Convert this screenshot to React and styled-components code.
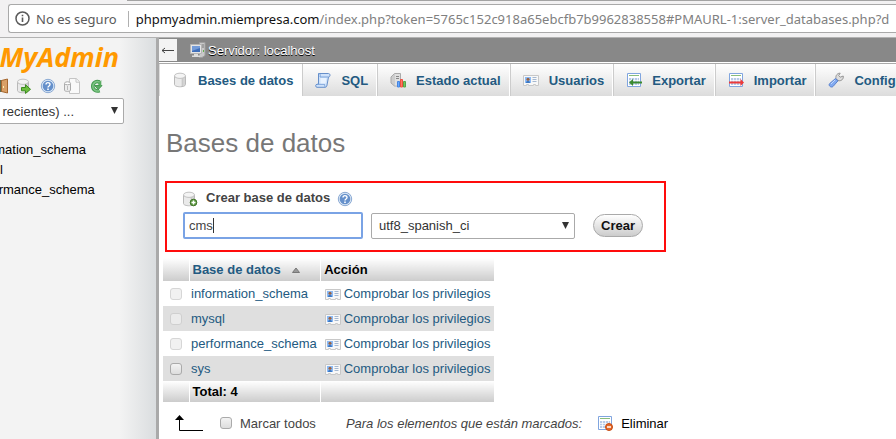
import React from "react";
import styled, { createGlobalStyle, css } from "styled-components";

const GlobalStyle = createGlobalStyle`
  * { box-sizing: border-box; }
  html, body, #root { height: 100%; }
  body {
    margin: 0;
    overflow: hidden;
    background: #fff;
    color: #444;
    font-family: "Liberation Sans", Arial, sans-serif;
    font-size: 13px;
  }
  button, input, select { font: inherit; }
  a { color: #235a81; text-decoration: none; }
  svg { display: block; flex: none; }
`;

const Window = styled.div`
  display: flex;
  flex-direction: column;
  height: 100%;
`;

/* browser bar */
const BrowserBar = styled.header`
  flex: none;
  height: 38px;
  padding: 4px 0 0 8px;
  background: linear-gradient(#a3a3a3, #a3a3a3) 127px 0 / 100% 1px no-repeat #f2f1f2;
  border-bottom: 1px solid #b2b2b2;
  overflow: hidden;
`;
const AddressBox = styled.div`
  display: flex;
  align-items: center;
  height: 29px;
  padding-left: 6px;
  border: 1px solid #a9a9a9;
  border-right: 0;
  border-radius: 3px 0 0 3px;
  background: #fff;
  color: #5a5a5a;
  font-family: "Noto Sans", "Open Sans", sans-serif;
  font-size: 13px;
  line-height: 20px;
  white-space: nowrap;
`;
const Security = styled.span`
  margin-left: 6px;
  padding-right: 11px;
  border-right: 1px solid #b0b0b0;
  line-height: 16px;
`;
const Url = styled.span`
  margin-left: 7px;
  color: #808080;
`;
const Host = styled.span`
  color: #111;
`;

const Body = styled.div`
  display: flex;
  flex: 1;
  min-height: 0;
`;

/* navigation panel, scrolled to its right part */
const Sidebar = styled.aside`
  flex: none;
  width: 159px;
  overflow: hidden;
  border-right: 3px solid #aaa;
  background: linear-gradient(to right, #f3f3f3 120px, #dadddf 156px);
`;
const SidebarContent = styled.div`
  display: flex;
  flex-direction: column;
  align-items: flex-end;
  width: 164px;
  margin-left: -40px;
  padding-top: 2px;
`;
const Logo = styled.a`
  margin-right: 5px;
  color: #f90;
  font-family: "Open Sans", "Noto Sans", sans-serif;
  font-size: 27px;
  font-weight: 700;
  font-style: italic;
  line-height: 34px;
`;
const IconLinks = styled.nav`
  display: flex;
  gap: 8px;
  margin: 4px 20px 4px 0;
  a { display: block; }
`;
const DbList = styled.ul`
  align-self: stretch;
  margin: 16px 0 0;
  padding: 0 0 0 9px;
  list-style: none;
  line-height: 20px;
  a { color: #000; }
`;

/* drop-downs */
const SelectWrap = styled.span`
  position: relative;
  display: block;
  width: ${(p) => p.$width}px;
  svg {
    position: absolute;
    top: 9px;
    right: 6px;
    pointer-events: none;
  }
`;
const Select = styled.select`
  display: block;
  width: 100%;
  height: 26px;
  padding: 0 20px 0 7px;
  border: 1px solid #aaa;
  border-radius: 2px;
  background: #fff;
  color: #333;
  appearance: none;
`;

/* main panel */
const Main = styled.main`
  flex: 1;
  min-width: 0;
  overflow: hidden;
`;
const ServerBar = styled.div`
  display: flex;
  align-items: center;
  height: 24px;
  background: #888;
  color: #fff;
  text-shadow: 0 1px 0 #000;
  a { color: #fff; }
`;
const CollapseButton = styled.button`
  width: 18px;
  height: 22px;
  margin-right: 13px;
  padding: 0 0 0 2px;
  border: 0;
  background: #f3f3f3;
`;
const ServerLink = styled.a`
  display: flex;
  align-items: center;
  gap: 2px;
`;
const Tabs = styled.nav`
  display: flex;
  margin-top: 1px;
  border-top: 1px solid #aaa;
`;
const Tab = styled.a`
  display: flex;
  flex: none;
  align-items: center;
  gap: 10px;
  height: 32px;
  padding: 0 8px 0 12px;
  border-left: 1px solid #ccc;
  border-right: 1px solid #fff;
  background: linear-gradient(#fff, #dcdcdc);
  font-weight: 700;
  white-space: nowrap;
  ${(p) => p.$active && css`
    border-left-color: #ddd;
    background: #fff;
  `}
`;
const Title = styled.h1`
  margin: 32px 7px 23px;
  color: #777;
  font-size: 26px;
  font-weight: 400;
  line-height: 30px;
`;
const CreateForm = styled.form`
  max-width: 501px;
  height: 71px;
  margin: 0 6px;
  padding: 5px 16px;
  border: 2px solid #ff0c0c;
`;
const FormLabel = styled.label`
  display: flex;
  align-items: flex-start;
  gap: 7px;
  height: 24px;
  font-weight: 700;
  line-height: 20px;
  svg { margin-top: 3px; }
`;
const FormRow = styled.div`
  display: flex;
  align-items: center;
  height: 27px;
`;
const NameField = styled.span`
  position: relative;
  margin-right: 8px;
`;
const NameInput = styled.input`
  display: block;
  width: 180px;
  height: 27px;
  padding: 0 4px;
  border: 2px solid #7aa3e5;
  border-radius: 2px;
  outline: 0;
  background: #fff;
  color: #444;
`;
const Caret = styled.span`
  position: absolute;
  top: 6px;
  left: 30px;
  width: 1px;
  height: 15px;
  background: #333;
`;
const CreateButton = styled.button`
  height: 23px;
  margin-left: 18px;
  padding: 0 7px;
  border: 1px solid #aaa;
  border-radius: 12px;
  background: linear-gradient(#fff, #ccc);
  color: #111;
  font-weight: 700;
`;

/* databases table */
const Table = styled.table`
  margin: 6px 4px 0;
  border-collapse: collapse;
  line-height: 16px;
  tr:nth-child(even) td { background: #dfdfdf; }
`;
const HeadCell = styled.th`
  height: ${(p) => (p.$foot ? 21 : 23)}px;
  padding: 0 3px;
  border-left: ${(p) => (p.$first ? 0 : 1)}px solid #fff;
  background: linear-gradient(#fff, #ccc);
  color: #000;
  text-align: left;
  white-space: nowrap;
`;
const SortLink = styled.a`
  display: flex;
  align-items: center;
  gap: 11px;
`;
const Cell = styled.td`
  height: 25px;
  padding: 0 4px 0 2px;
  white-space: nowrap;
`;
const CheckCell = styled(Cell)`
  width: 26px;
  padding: 0 7px;
`;
const ActionCell = styled(Cell)`
  padding-left: 4px;
`;
const PrivLink = styled.a`
  display: flex;
  align-items: center;
  gap: 3px;
`;
const Check = styled.input`
  display: block;
  width: 12px;
  height: 12px;
  margin: 0;
  border: 1px solid #aaa;
  border-radius: 3px;
  background: linear-gradient(#f3f3f3, #ddd);
  appearance: none;
  &:disabled { border-color: #ccc; background: #eee; opacity: 0.8; }
`;

const BulkRow = styled.div`
  display: flex;
  align-items: center;
  height: 20px;
  margin: 11px 0 0 15px;
  white-space: nowrap;
`;
const CheckAll = styled.label`
  display: flex;
  align-items: center;
  gap: 8px;
  margin: 0 30px 0 16px;
`;
const DropButton = styled.button`
  display: flex;
  align-items: center;
  gap: 8px;
  margin-left: 15px;
  padding: 0;
  border: 0;
  background: none;
  color: #000;
`;

const Icon = ({ children, w = 16 }) => (
  <svg width={w} height="16" viewBox={`0 0 ${w} 16`} aria-hidden="true">{children}</svg>
);

const Cylinder = () => (
  <g>
    <path d="M2.500 4v8.500c0 3 11 3 11 0V4" fill="#dedede" stroke="#b9b9b9" />
    <path d="M4 5.500v8M6 6v8.300M8 6v8.500" stroke="#f6f6f6" />
    <path d="M10.500 6v8M12 5v8.500" stroke="#c9c9c9" />
    <ellipse cx="8" cy="3.800" rx="5.500" ry="2.600" fill="#f4f4f4" stroke="#c2c2c2" />
  </g>
);
const DbIcon = () => <Icon><Cylinder /></Icon>;
const DbAddIcon = () => (
  <Icon>
    <g transform="translate(-2 0)"><Cylinder /></g>
    <circle cx="10.500" cy="11.500" r="3.300" fill="#5d9a40" stroke="#3f7427" />
    <path d="M10.500 9.500v4M8.500 11.500h4" stroke="#fff" strokeWidth="1.400" />
  </Icon>
);
const DbGoIcon = () => (
  <Icon>
    <g transform="translate(-1 0)"><Cylinder /></g>
    <path d="M5.500 9.500h4V6.700l5 4.600-5 4.200v-2.700h-4z" fill="#6cbf3e" stroke="#3d8a22" />
  </Icon>
);
const HelpIcon = () => (
  <Icon>
    <circle cx="8" cy="8" r="6.700" fill="#dce8f6" stroke="#8aa9d3" />
    <circle cx="8" cy="8" r="5.300" fill="#6590cb" />
    <path d="M6 6.600C6 4 10 4 10 6.500 10 8 8 7.900 8 9.500" fill="none" stroke="#fff" strokeWidth="1.400" />
    <path d="M7.200 10.600h1.600v1.500H7.200z" fill="#fff" />
  </Icon>
);
const ExitIcon = () => (
  <Icon>
    <path d="M1 2h9v12H1z" fill="#5b6d52" />
    <path d="M9.500 2.500 15.500 1v14l-6-1.500z" fill="#d9a066" stroke="#a5672f" />
    <path d="M11.500 8v2" stroke="#fff2b0" />
  </Icon>
);
const DocIcon = () => (
  <Icon>
    <path d="M5.500.5h6.800l3.200 3.200v11.800h-10z" fill="#f9f9f9" stroke="#c5c5c5" />
    <path d="M12 .8v3.400h3.400" fill="none" stroke="#c5c5c5" />
    <path d="M.5 5.500v6.700c0 1.600 6 1.600 6 0V5.500" fill="#ededed" stroke="#aaa" />
    <ellipse cx="3.500" cy="5.300" rx="3" ry="1.500" fill="#fff" stroke="#aaa" />
    <path d="M3.500 8v4" stroke="#bbb" />
  </Icon>
);
const ReloadIcon = () => (
  <Icon>
    <path d="M11.500 4A4.700 4.700 0 1 0 11.500 12.500" fill="none" stroke="#459a50" strokeWidth="3.600" />
    <path d="M11.500 4A4.700 4.700 0 1 0 11.500 12.500" fill="none" stroke="#7cc583" strokeWidth="1.600" />
    <path d="M6.500 7.500h7.500L10.300 11.500z" fill="#5aab62" stroke="#459a50" />
    <path d="M13.300 2v6.500L9.500 6z" fill="#5aab62" />
  </Icon>
);
const ServerIcon = () => (
  <Icon>
    <path d="M9.500.5h5.500v13l-3 2h-2.500z" fill="#c9c9c9" stroke="#9e9e9e" />
    <path d="M11 3h3M11 5h3" stroke="#777" />
    <path d="M13.500 8v2" stroke="#62b34b" />
    <path d="M.5 2.500h11v9H.5z" fill="#e5e5e5" stroke="#b5b5b5" />
    <path d="M2 4h8v6H2z" fill="#3f6fba" />
    <path d="M2 4h8v2l-8 3z" fill="#739bd8" />
    <path d="M4 12h4v1.500h2v1.500H2v-1.500h2z" fill="#ddd" />
  </Icon>
);
const SqlIcon = () => (
  <Icon>
    <path d="M3.500 1.500h10c2 0 2 3.500 0 3.500L12 13c0 1.500-1 2.300-2 2.300H2c-1.800 0-1.800-3 0-3h1.500z" fill="#cfe2fa" stroke="#668fca" />
    <path d="M3.500 1.500c1.600 0 2.200 1.500 1.500 3.500h8.500M2 12.300h7.500c0 2 1 3 1 3" fill="none" stroke="#7ba3da" />
    <path d="M5.500 6h6l-1 5.500h-5z" fill="#e9f3ff" />
  </Icon>
);
const StatusIcon = () => (
  <Icon>
    <path d="M4.500 1.500h6v12.500h-6L1 11V5z" fill="#cdcdcd" stroke="#aaa" />
    <path d="M5 2h5v11.500H5z" fill="#e0e0e0" />
    <path d="M6 4.500h3M6 6.500h3" stroke="#888" />
    <path d="M7.500 9.500h2v5.500h-2z" fill="#67a8ff" stroke="#4585e0" />
    <path d="M10.500 7.500h2v7.500h-2z" fill="#ff7960" stroke="#ee5140" />
    <path d="M13.500 9.500h2v5.500h-2z" fill="#77c75c" stroke="#55a548" />
  </Icon>
);
const UserCardIcon = () => (
  <Icon>
    <path d="M.5 3.500h15v10h-3v-1h-2v1h-5v-1h-2v1h-3z" fill="#f8f8f8" stroke="#c8c8c8" />
    <path d="M2 5h6v6H2z" fill="#8bbaf5" />
    <path d="M3 11c0-3 4-3 4 0z" fill="#3b78c4" />
    <circle cx="5" cy="7.200" r="1.500" fill="#9a6240" />
    <path d="M9.500 5.500h4M9.500 7.500h4M9.500 9.500h4" stroke="#a5b8d1" />
  </Icon>
);
const Sheet = () => (
  <g>
    <path d="M1.500 1.500h13v13h-13z" fill="#fff" stroke="#80a5df" />
    <path d="M3 3.500h10" stroke="#89bd7c" />
    <path d="M3 6h10v7H3z" fill="#b7cae8" />
    <path d="M3 8.500h10M3 10.500h10M5.500 6v7M8.500 6v7M11.500 6v7" stroke="#fff" strokeWidth="0.700" />
  </g>
);
const ExportIcon = () => (
  <Icon><Sheet /><path d="M3 10.500 7 7v2.500h9v2H7V14z" fill="#3a8a30" /></Icon>
);
const ImportIcon = () => (
  <Icon><Sheet /><path d="M16 10.500 12.500 7v2.500H1v2h11.500V14z" fill="#ed3a3a" /></Icon>
);
const DropIcon = () => (
  <Icon>
    <Sheet />
    <circle cx="12" cy="12" r="3.500" fill="#e2692c" stroke="#c54b12" />
    <path d="M10 12h4" stroke="#fff" strokeWidth="1.500" />
  </Icon>
);
const WrenchIcon = () => (
  <Icon>
    <path d="M8 6.500c-.7-3 1.500-5.500 4.200-5.300L10.700 3.500l1.500 1.700 3-1.200c.7 3-2 5.500-5.200 4.600z" fill="#ddd" stroke="#949494" />
    <path d="m7.500 6.500 2.500 2.300-5 5.700c-1.500 1.500-5-.6-3.500-2.800z" fill="#82aaf0" stroke="#5a82cd" />
    <path d="m3 12 4-4" stroke="#c2d8ff" />
  </Icon>
);
const SelectArrow = () => (
  <svg width="7" height="7" viewBox="0 0 7 7" aria-hidden="true"><path d="M0 0h7L3.500 7z" fill="#333" /></svg>
);

const SelectBox = ({ width, label, value }) => (
  <SelectWrap $width={width}>
    <Select aria-label={label}><option>{value}</option></Select>
    <SelectArrow />
  </SelectWrap>
);

const tabs = [
  { label: "Bases de datos", icon: DbIcon },
  { label: "SQL", icon: SqlIcon },
  { label: "Estado actual", icon: StatusIcon },
  { label: "Usuarios", icon: UserCardIcon },
  { label: "Exportar", icon: ExportIcon },
  { label: "Importar", icon: ImportIcon },
  { label: "Configuración", icon: WrenchIcon },
];
const navLinks = [
  { label: "Salir", icon: ExitIcon },
  { label: "Consulta", icon: DbGoIcon },
  { label: "Ayuda", icon: HelpIcon },
  { label: "Documentación", icon: DocIcon },
  { label: "Recargar", icon: ReloadIcon },
];
const databases = [
  { name: "information_schema", locked: true },
  { name: "mysql", locked: true },
  { name: "performance_schema", locked: true },
  { name: "sys", locked: false },
];

export default function App() {
  return (
    <Window>
      <GlobalStyle />
      <BrowserBar>
        <AddressBox>
          <svg width="15" height="15" viewBox="0 0 15 15" aria-hidden="true">
            <circle cx="7.500" cy="7.500" r="6.500" fill="none" stroke="#5a5a5a" strokeWidth="1.500" />
            <path d="M6.700 6.500h1.600V11H6.700zM6.700 3.700h1.600v1.600H6.700z" fill="#5a5a5a" />
          </svg>
          <Security>No es seguro</Security>
          <Url>
            <Host>phpmyadmin.miempresa.com</Host>
            /index.php?token=5765c152c918a65ebcfb7b9962838558#PMAURL-1:server_databases.php?d
          </Url>
        </AddressBox>
      </BrowserBar>
      <Body>
        <Sidebar>
          <SidebarContent>
            <Logo href="#inicio">phpMyAdmin</Logo>
            <IconLinks>
              {navLinks.map(({ label, icon: Glyph }) => (
                <a key={label} href="#nav" aria-label={label}><Glyph /></a>
              ))}
            </IconLinks>
            <SelectBox width={175} label="Tablas recientes" value="(Tablas recientes) ..." />
            <DbList>
              {databases.slice(0, 3).map((db) => (
                <li key={db.name}><a href="#db">{db.name}</a></li>
              ))}
            </DbList>
          </SidebarContent>
        </Sidebar>
        <Main>
          <ServerBar>
            <CollapseButton aria-label="Ocultar panel">
              <svg width="13" height="9" viewBox="0 0 13 9" aria-hidden="true">
                <path d="M1 4.500h12M4 2 1 4.500 4 7" fill="none" stroke="#444" />
              </svg>
            </CollapseButton>
            <ServerLink href="#servidor"><ServerIcon />Servidor: localhost</ServerLink>
          </ServerBar>
          <Tabs>
            {tabs.map(({ label, icon: Glyph }, i) => (
              <Tab key={label} href="#tab" $active={i === 0}><Glyph />{label}</Tab>
            ))}
          </Tabs>
          <Title>Bases de datos</Title>
          <CreateForm onSubmit={(e) => e.preventDefault()}>
            <FormLabel htmlFor="new-db"><DbAddIcon />Crear base de datos<HelpIcon /></FormLabel>
            <FormRow>
              <NameField>
                <NameInput id="new-db" type="text" defaultValue="cms" />
                <Caret />
              </NameField>
              <SelectBox width={204} label="Cotejamiento" value="utf8_spanish_ci" />
              <CreateButton type="submit">Crear</CreateButton>
            </FormRow>
          </CreateForm>
          <Table>
            <thead>
              <tr>
                <HeadCell $first />
                <HeadCell>
                  <SortLink href="#orden">
                    Base de datos
                    <svg width="8" height="6" viewBox="0 0 8 6" aria-hidden="true">
                      <path d="M4 1 7.500 5.500h-7z" fill="#999" stroke="#777" />
                    </svg>
                  </SortLink>
                </HeadCell>
                <HeadCell>Acción</HeadCell>
              </tr>
            </thead>
            <tbody>
              {databases.map((db) => (
                <tr key={db.name}>
                  <CheckCell><Check type="checkbox" aria-label={db.name} disabled={db.locked} /></CheckCell>
                  <Cell><a href="#db">{db.name}</a></Cell>
                  <ActionCell><PrivLink href="#privilegios"><UserCardIcon />Comprobar los privilegios</PrivLink></ActionCell>
                </tr>
              ))}
            </tbody>
            <tfoot>
              <tr>
                <HeadCell $first $foot />
                <HeadCell $foot>Total: 4</HeadCell>
                <HeadCell $foot />
              </tr>
            </tfoot>
          </Table>
          <BulkRow>
            <svg width="30" height="17" viewBox="0 0 30 17" aria-hidden="true">
              <path d="M5.500 3v12.500H29" fill="none" stroke="#000" />
              <path d="M5.500 0 10 5H1z" fill="#000" />
            </svg>
            <CheckAll><Check type="checkbox" />Marcar todos</CheckAll>
            <em>Para los elementos que están marcados:</em>
            <DropButton type="button"><DropIcon />Eliminar</DropButton>
          </BulkRow>
        </Main>
      </Body>
    </Window>
  );
}
